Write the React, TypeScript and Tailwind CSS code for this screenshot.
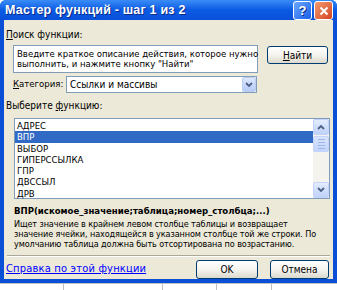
import React from 'react';

const font = { fontFamily: '"DejaVu Sans Condensed", "DejaVu Sans", sans-serif' };
const titleFont = { fontFamily: '"Liberation Sans", sans-serif', textShadow: '1px 1px 0 #0a2a8a' };

const functions = ['АДРЕС', 'ВПР', 'ВЫБОР', 'ГИПЕРССЫЛКА', 'ГПР', 'ДВССЫЛ', 'ДРВ'];

const Chevron = ({ up }: { up?: boolean }) => (
  <svg width="8" height="6" viewBox="0 0 8 6">
    <path d={up ? 'M1 5 L4 2 L7 5' : 'M1 1 L4 4 L7 1'} fill="none" stroke="#4d6185" strokeWidth="1.8" />
  </svg>
);

const XpButton = ({ children, className }: { children: React.ReactNode; className?: string }) => (
  <div className={'flex items-center justify-center rounded-[3px] border border-[#003c74] bg-gradient-to-b from-white via-[#f5f4ef] to-[#dcd9cc] text-black text-[10px] ' + (className || '')}>
    {children}
  </div>
);

export default function App() {
  return (
    <div className="w-[337px] h-[290px] bg-white overflow-hidden flex flex-col font-stretch-condensed" style={font}>
      <div className="h-[283px] flex flex-col bg-[#0a4fd6] rounded-t-[6px]">
        {/* title bar */}
        <div className="h-[23px] flex items-center justify-between pl-[5px] pr-[4px] bg-gradient-to-b from-[#3a8cf6] via-[#0b5ae4] to-[#0950d8] rounded-t-[6px]">
          <span className="text-white font-bold text-[12.5px] tracking-[0.2px]" style={titleFont}>
            Мастер функций - шаг 1 из 2
          </span>
          <div className="flex gap-[2px] mt-[1px]">
            <div className="w-[19px] h-[19px] rounded-[3px] border border-white bg-gradient-to-br from-[#6aa6ff] to-[#1a5ee8] flex items-center justify-center text-white font-bold text-[13px]" style={titleFont}>?</div>
            <div className="w-[19px] h-[19px] rounded-[3px] border border-white bg-gradient-to-br from-[#f39a70] to-[#d1401c] flex items-center justify-center">
              <svg width="10" height="10" viewBox="0 0 10 10">
                <path d="M1.5 1.5 L8.5 8.5 M8.5 1.5 L1.5 8.5" stroke="white" strokeWidth="2" />
              </svg>
            </div>
          </div>
        </div>

        {/* body */}
        <div className="flex-1 mx-[4px] mb-[4px] bg-[#ece9d8] flex flex-col px-[2px] text-[10px] text-black">
          <div className="mt-[9px] h-[12px] leading-[12px]">
            <span className="underline">П</span>оиск функции:
          </div>

          <div className="flex mt-[4px]">
            <div className="ml-[7px] w-[245px] h-[28px] bg-white border border-[#7f9db9] px-[3px] pt-[3px] leading-[10px] text-[9.5px] whitespace-nowrap">
              Введите краткое описание действия, которое нужно<br />
              выполнить, и нажмите кнопку "Найти"
            </div>
            <XpButton className="ml-[9px] mt-[1px] w-[61px] h-[18px]">
              <span><span className="underline">Н</span>айти</span>
            </XpButton>
          </div>

          <div className="flex items-center mt-[3px] ml-[7px]">
            <span className="w-[53px] text-[9.5px]"><span className="underline">К</span>атегория:</span>
            <div className="w-[191px] h-[17px] bg-white border border-[#7f9db9] flex items-center">
              <span className="flex-1 pl-[3px]">Ссылки и массивы</span>
              <div className="w-[14px] h-[15px] rounded-[2px] bg-gradient-to-b from-[#dde8fe] to-[#b6cbf8] border border-[#bccdf2] flex items-center justify-center">
                <Chevron />
              </div>
            </div>
          </div>

          <div className="mt-[7px] h-[12px] leading-[12px]">
            Выберите <span className="underline">ф</span>ункцию:
          </div>

          <div className="mt-[6px] ml-[8px] w-[316px] h-[81px] bg-white border border-[#7f9db9] flex text-[9.5px]">
            <div className="flex-1 pt-[1px]">
              {functions.map(f => (
                <div
                  key={f}
                  className={'h-[11.3px] leading-[11.3px] pl-[2px] ' + (f === 'ВПР' ? 'bg-[#316ac5] text-white' : '')}
                >
                  {f}
                </div>
              ))}
            </div>
            <div className="w-[16px] bg-[#f4f3ee] flex flex-col">
              <div className="h-[16px] rounded-[2px] bg-gradient-to-b from-[#e3ecff] to-[#bfd2fa] border border-[#c3d3fd] flex items-center justify-center">
                <Chevron up />
              </div>
              <div className="h-[16px] mt-[1px] rounded-[2px] bg-gradient-to-b from-[#d9e5fe] to-[#c2d4fb] border border-[#c3d3fd] flex flex-col items-center justify-center gap-[2px]">
                <div className="w-[7px] h-[1px] bg-[#9fb5e8]" />
                <div className="w-[7px] h-[1px] bg-[#9fb5e8]" />
                <div className="w-[7px] h-[1px] bg-[#9fb5e8]" />
                <div className="w-[7px] h-[1px] bg-[#9fb5e8]" />
              </div>
              <div className="flex-1" />
              <div className="h-[16px] rounded-[2px] bg-gradient-to-b from-[#e3ecff] to-[#bfd2fa] border border-[#c3d3fd] flex items-center justify-center">
                <Chevron />
              </div>
            </div>
          </div>

          <div className="mt-[6px] ml-[8px] font-bold h-[12px] leading-[12px] text-[9.5px]">
            ВПР(искомое_значение;таблица;номер_столбца;...)
          </div>
          <div className="mt-[2px] ml-[8px] leading-[10px] text-[9px] tracking-[-0.1px] whitespace-nowrap">
            Ищет значение в крайнем левом столбце таблицы и возвращает<br />
            значение ячейки, находящейся в указанном столбце той же строки. По<br />
            умолчанию таблица должна быть отсортирована по возрастанию.
          </div>

          <div className="mt-[6px] mx-[1px] h-[2px] border-t border-[#aca899] border-b border-b-white" />

          <div className="flex items-center mt-[3px]">
            <span className="flex-1 text-[#0000ff] underline text-[11px] tracking-[0.2px]">Справка по этой функции</span>
            <XpButton className="w-[62px] h-[19px]">OK</XpButton>
            <XpButton className="ml-[12px] mr-[2px] w-[59px] h-[19px]">Отмена</XpButton>
          </div>
        </div>
      </div>
      {/* excel grid behind */}
      <div className="flex-1 flex border-t border-[#c0c0c0]">
        <div className="w-[64px] border-r border-[#c0c0c0]" />
        <div className="w-[99px] border-r border-[#c0c0c0]" />
        <div className="w-[54px] border-r border-[#c0c0c0]" />
        <div className="w-[55px] border-r border-[#c0c0c0]" />
      </div>
    </div>
  );
}
